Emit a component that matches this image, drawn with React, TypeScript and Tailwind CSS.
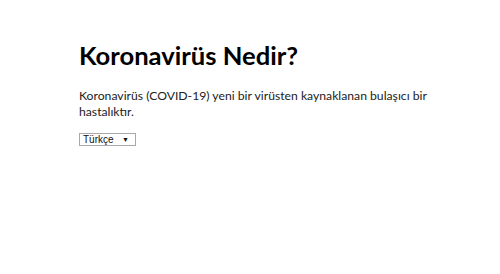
export default function App() {
  return (
    <div className="min-h-[274px] w-[500px] bg-white pl-[79px] pt-[40px] text-black [font-family:Lato,sans-serif]">
      <h1 className="text-[25.6px] font-bold leading-[31px]">Koronavirüs Nedir?</h1>
      <p className="mt-[17px] w-[352px] text-[12.2px] leading-[16px] text-[#222]">
        Koronavirüs (COVID-19) yeni bir virüsten kaynaklanan bulaşıcı bir hastalıktır.
      </p>
      <div className="mt-[13px] flex h-[13px] w-[57px] items-center justify-between border border-[#a9a9a9] bg-white pl-[3px] pr-[6px] text-[10px] leading-none text-[#111] [font-family:'Liberation_Sans',sans-serif]">
        <span>Türkçe</span>
        <span className="text-[7px]">▼</span>
      </div>
    </div>
  );
}
